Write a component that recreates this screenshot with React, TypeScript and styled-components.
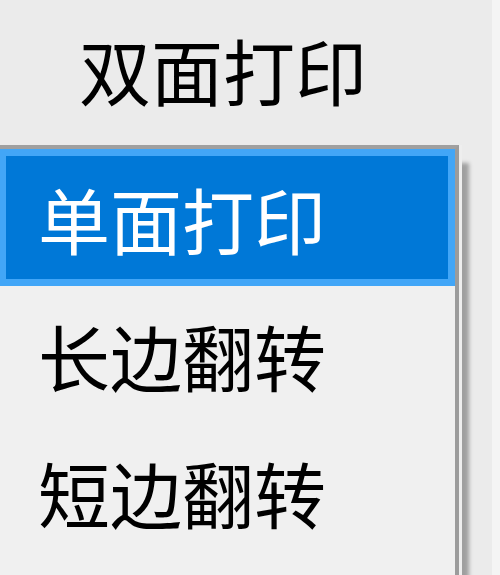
import styled, { createGlobalStyle } from "styled-components";

const GlobalStyle = createGlobalStyle`
  html, body {
    margin: 0;
    padding: 0;
    height: 100%;
    overflow: hidden;
  }
  body {
    background: linear-gradient(to right, #ebebeb 492px, #f4f4f4 492px);
    font-family: "Noto Sans CJK SC", "Noto Sans", sans-serif;
  }
`;

const Screen = styled.div`
  width: 500px;
  height: 575px;
  display: flex;
  flex-direction: column;
`;

const Current = styled.div`
  height: 145px;
  display: flex;
  align-items: center;
  padding-left: 79px;
  padding-bottom: 7px;
  box-sizing: border-box;
  font-size: 72px;
  line-height: 1;
  color: #000;
`;

const List = styled.ul`
  list-style: none;
  margin: 0;
  padding: 0;
  width: 459px;
  flex: 1;
  box-sizing: border-box;
  background: #f0f0f0;
  border-top: 4px solid #a0a0a0;
  border-right: 4px solid #9c9c9c;
  box-shadow: 3px 0 0 0 #eeeeee, 11px 17px 4px -1px rgba(0, 0, 0, 0.32);
`;

const Item = styled.li<{ $active?: boolean }>`
  height: 137px;
  display: flex;
  align-items: center;
  box-sizing: border-box;
  padding-left: 32px;
  border: 7px solid ${({ $active }) => ($active ? "#42a6f7" : "transparent")};
  border-left-width: 6px;
  background: ${({ $active }) => ($active ? "#0078d7" : "transparent")};
  color: ${({ $active }) => ($active ? "#ffffff" : "#000000")};
  font-size: 72px;
  line-height: 1;
`;

const options = ["单面打印", "长边翻转", "短边翻转"];

export default function App() {
  return (
    <Screen>
      <GlobalStyle />
      <Current>双面打印</Current>
      <List>
        {options.map((o, i) => (
          <Item key={o} $active={i === 0}>
            {o}
          </Item>
        ))}
      </List>
    </Screen>
  );
}
